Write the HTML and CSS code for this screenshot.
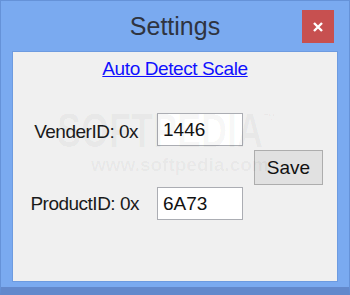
FILE: index.html
```html
<!DOCTYPE html>
<html lang="en">
<head>
    <meta charset="UTF-8">
    <title>Settings</title>
    <link rel="stylesheet" href="styles.css">
</head>
<body>
    <div class="window">
        <div class="titlebar">
            <span></span>
            <span class="title">Settings</span>
            <button class="close-btn">
                <svg width="10" height="10" viewBox="0 0 10 10">
                    <path d="M1 1 L9 9 M9 1 L1 9" stroke="#fff" stroke-width="2.4" fill="none"/>
                </svg>
            </button>
        </div>

        <div class="panel">
            <a class="detect-link" href="#">Auto Detect Scale</a>

            <div class="form">
                <label class="label label-first">VenderID: 0x</label>
                <input class="id-input" type="text" value="1446">
                <button class="save-btn">Save</button>
                <label class="label">ProductID: 0x</label>
                <input class="id-input" type="text" value="6A73">
            </div>

            <!-- watermark -->
            <div class="mark">SOFTPEDIA<sup>™</sup></div>
            <div class="mark-url">www.softpedia.com</div>
        </div>
    </div>
</body>
</html>
```

FILE: styles.css
```css
* {
    margin: 0;
    padding: 0;
    box-sizing: border-box;
}

body {
    font-family: 'Liberation Sans', Arial, sans-serif;
    background: #7aaaf0;
}

.window {
    width: 350px;
    height: 295px;
    background: #7aaaf0;
    border: 1px solid #6592d8;
    border-bottom: 8px solid #6389cc;
    padding: 0 11px 5px;
    display: flex;
    flex-direction: column;
}

.titlebar {
    height: 50px;
    display: grid;
    grid-template-columns: 1fr auto 1fr;
    align-items: start;
    margin: 0 -11px;
}

.title {
    font-size: 25px;
    line-height: 30px;
    color: #2f3440;
    padding-top: 10px;
}

.close-btn {
    justify-self: end;
    width: 32px;
    height: 33px;
    margin-top: 9px;
    margin-right: 15px;
    background: #c75050;
    border: none;
    display: flex;
    align-items: center;
    justify-content: center;
}

.panel {
    flex: 1;
    background: #f0f0f0;
    border: 1px solid #6d9be0;
    position: relative;
    display: flex;
    flex-direction: column;
    align-items: center;
    padding-top: 6px;
}

.detect-link {
    font-size: 19px;
    line-height: 22px;
    letter-spacing: -0.4px;
    color: #1010ff;
    text-decoration: underline;
}

.form {
    align-self: stretch;
    margin-top: 33px;
    display: grid;
    grid-template-columns: 126px 86px 69px;
    grid-template-rows: 33px 33px;
    column-gap: 18px;
    row-gap: 41px;
}

.label {
    font-size: 19px;
    letter-spacing: -0.5px;
    color: #1a1a1a;
    text-align: right;
    align-self: center;
}

.label-first {
    padding-top: 5px;
    padding-right: 1px;
}

.id-input {
    width: 86px;
    height: 33px;
    border: 1px solid #abadb3;
    background: white;
    padding-left: 5px;
    font-family: 'Liberation Sans', Arial, sans-serif;
    font-size: 19px;
    color: #111;
    outline: none;
}

.save-btn {
    grid-column: 3;
    grid-row: 1 / span 2;
    align-self: center;
    margin-left: -7px;
    width: 69px;
    height: 35px;
    margin-top: 2px;
    background: #e1e1e1;
    border: 1px solid #adadad;
    font-family: 'Liberation Sans', Arial, sans-serif;
    font-size: 19px;
    color: #111;
}

.mark {
    position: absolute;
    left: 44px;
    top: 58px;
    font-size: 36px;
    font-weight: bold;
    color: rgba(0, 0, 0, 0.035);
    transform: scaleY(1.35);
    pointer-events: none;
}

.mark sup {
    font-size: 13px;
    font-weight: normal;
    vertical-align: 16px;
}

.mark-url {
    position: absolute;
    left: 78px;
    top: 102px;
    font-size: 19px;
    font-weight: bold;
    color: rgba(0, 0, 0, 0.04);
    pointer-events: none;
}
```
